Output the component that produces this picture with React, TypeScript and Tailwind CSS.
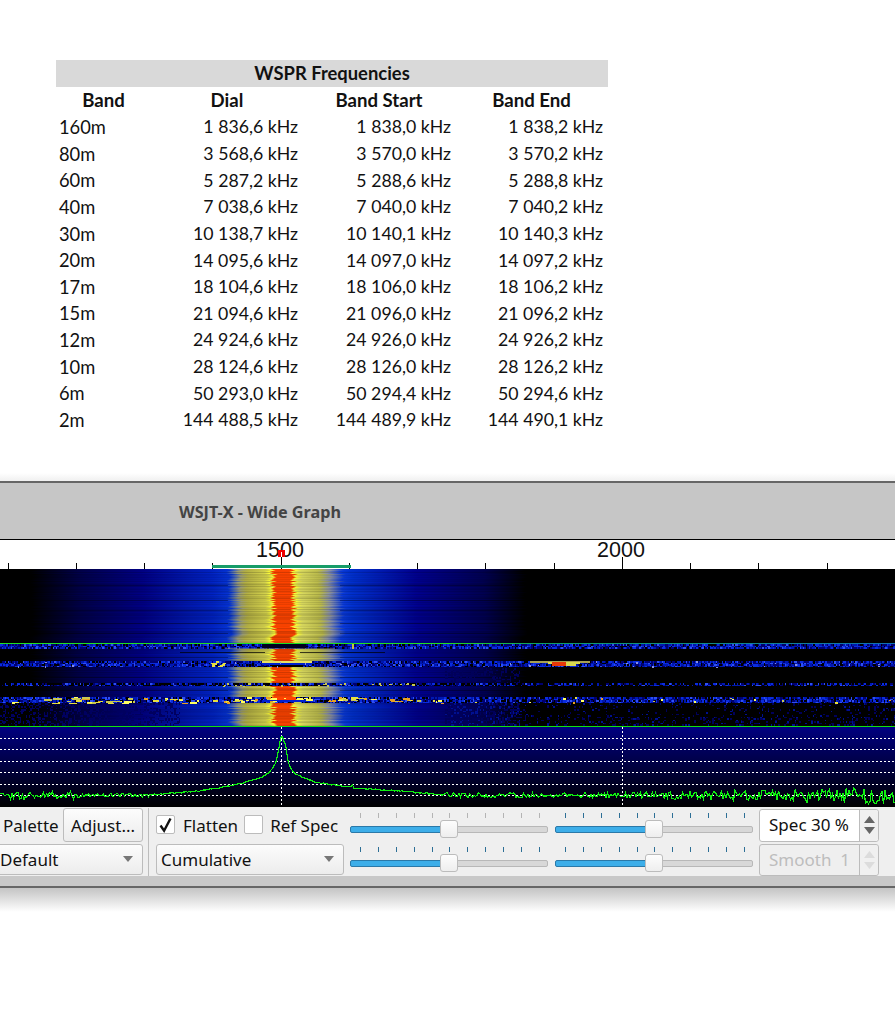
import { useMemo } from "react";

const rows = [
  ["160m", "1 836,6 kHz", "1 838,0 kHz", "1 838,2 kHz"],
  ["80m", "3 568,6 kHz", "3 570,0 kHz", "3 570,2 kHz"],
  ["60m", "5 287,2 kHz", "5 288,6 kHz", "5 288,8 kHz"],
  ["40m", "7 038,6 kHz", "7 040,0 kHz", "7 040,2 kHz"],
  ["30m", "10 138,7 kHz", "10 140,1 kHz", "10 140,3 kHz"],
  ["20m", "14 095,6 kHz", "14 097,0 kHz", "14 097,2 kHz"],
  ["17m", "18 104,6 kHz", "18 106,0 kHz", "18 106,2 kHz"],
  ["15m", "21 094,6 kHz", "21 096,0 kHz", "21 096,2 kHz"],
  ["12m", "24 924,6 kHz", "24 926,0 kHz", "24 926,2 kHz"],
  ["10m", "28 124,6 kHz", "28 126,0 kHz", "28 126,2 kHz"],
  ["6m", "50 293,0 kHz", "50 294,4 kHz", "50 294,6 kHz"],
  ["2m", "144 488,5 kHz", "144 489,9 kHz", "144 490,1 kHz"],
];

// seeded so the picture stays the same on every load
function makeRandom(seed: number) {
  let s = seed;
  return () => {
    s = (s * 1664525 + 1013904223) % 4294967296;
    return s / 4294967296;
  };
}

const stops: [number, string][] = [
  [0, "#000000"], [32, "#000000"], [80, "#000048"], [143, "#000085"], [190, "#0018b0"],
  [213, "#0022c4"], [229, "#0533d4"], [234, "#4464b8"], [240, "#9a9c78"], [247, "#b4b044"],
  [267, "#d4d24c"], [272, "#ffff38"], [275, "#ff4400"], [292, "#ff4400"], [295, "#ffff38"],
  [301, "#dcdc60"], [320, "#bcbc4c"], [330, "#8890a8"], [343, "#0a3adb"], [352, "#0030d0"],
  [417, "#000090"], [485, "#000050"], [525, "#000000"], [895, "#000000"],
];

function pickBlue(r: number, density: number) {
  if (r > density) return "#000000";
  const v = r / density;
  if (v < 0.35) return "#000070";
  if (v < 0.65) return "#0018b0";
  if (v < 0.9) return "#0a2ce0";
  return "#3050f0";
}

function Waterfall() {
  const { jitter, cells, specks } = useMemo(() => {
    const rnd = makeRandom(7);
    const jitter: { y: number; dx: number; o: number }[] = [];
    for (let y = 0; y < 157; y++) jitter.push({ y, dx: (rnd() - 0.5) * 6, o: 0.82 + rnd() * 0.18 });

    const cells: Record<string, string> = {};
    const put = (c: string, x: number, y: number, w = 1.5, h = 1.5) => {
      cells[c] = (cells[c] || "") + `M${x} ${y}h${w}v${h}h${-w}z`;
    };
    const bands: [number, number, number][] = [
      [75, 79, 0.85],
      [92, 98, 0.85],
      [114, 117, 0.55],
      [128, 134, 0.8],
    ];
    for (const [a, b, d] of bands) {
      for (let y = a; y < b; y += 1.5) {
        for (let x = 0; x < 895; x += 1.5) {
          put(pickBlue(rnd(), d), x, y);
        }
      }
    }
    // faint noise in the quiet rows on the right and left
    for (let y = 134; y < 157; y += 1.5) {
      for (let x = 445; x < 895; x += 1.5) {
        const d = x < 520 ? 0.5 : y > 146 ? 0.2 : 0.1;
        if (rnd() < d) put(rnd() < 0.75 ? "#00005a" : "#001090", x, y);
      }
      for (let x = 0; x < 180; x += 1.5) {
        if (rnd() < 0.35) put("#000060", x, y);
      }
    }
    for (let y = 99; y < 113; y += 1.5) {
      for (let x = 445; x < 520; x += 1.5) {
        if (rnd() < 0.3) put("#00005a", x, y);
      }
    }

    const specks: { x: number; y: number; w: number; c: string }[] = [];
    const colors = ["#e8e040", "#c8c850", "#ffff60", "#e8a020"];
    for (let i = 0; i < 120; i++) {
      const x = rnd() < 0.8 ? 5 + rnd() * 440 : 445 + rnd() * 445;
      specks.push({ x, y: 128 + rnd() * 6, w: 1.5 + rnd() * (x < 445 ? 7 : 1), c: colors[Math.floor(rnd() * 4)] });
    }
    for (let i = 0; i < 28; i++) {
      specks.push({ x: rnd() * 895, y: 92 + rnd() * 6, w: 1.5, c: "#8890e0" });
      specks.push({ x: 200 + rnd() * 220, y: 114 + rnd() * 3, w: 2, c: "#c8c850" });
    }
    for (let i = 0; i < 10; i++) specks.push({ x: 208 + rnd() * 18, y: 92 + rnd() * 5, w: 3, c: "#e8e040" });
    return { jitter, cells, specks };
  }, []);

  return (
    <svg width="895" height="157" viewBox="0 0 895 157" className="block" shapeRendering="crispEdges">
      <defs>
        <linearGradient id="wf" gradientUnits="userSpaceOnUse" x1="0" y1="0" x2="895" y2="0">
          {stops.map(([x, c]) => (
            <stop key={x} offset={x / 895} stopColor={c} />
          ))}
        </linearGradient>
        <linearGradient id="line" gradientUnits="userSpaceOnUse" x1="450" y1="0" x2="895" y2="0">
          <stop offset="0" stopColor="#20d820" />
          <stop offset="0.2" stopColor="#10a060" />
          <stop offset="1" stopColor="#1070b0" />
        </linearGradient>
      </defs>
      <rect width="895" height="157" fill="#000000" />
      {jitter.map((r) => (
        <g key={r.y} transform={`translate(${r.dx} 0)`}>
          <rect x="-6" y={r.y} width="907" height="1.2" fill="url(#wf)" opacity={r.o} />
        </g>
      ))}
      {/* dim rows across the tails of the signal */}
      {[16, 31, 41, 54, 64, 88, 108, 121].map((y) => (
        <g key={y} fill="#000000" opacity="0.3">
          <rect x="0" y={y} width="228" height="1" />
          <rect x="340" y={y} width="200" height="1" />
        </g>
      ))}
      {Object.entries(cells).map(([c, d]) => (
        <path key={c} d={d} fill={c} />
      ))}
      <rect x="262" y="75" width="44" height="4" fill="#000020" />
      <rect x="225" y="79" width="110" height="1" fill="#b0b050" opacity="0.4" />
      <rect x="180" y="83" width="85" height="1" fill="#000000" opacity="0.7" />
      <rect x="300" y="83" width="85" height="1" fill="#000000" opacity="0.7" />
      <rect x="262" y="92" width="50" height="1.5" fill="#e8e060" />
      <rect x="262" y="93.5" width="50" height="2" fill="#0020d0" />
      <rect x="272" y="95.5" width="30" height="2.5" fill="#000000" />
      <rect x="272" y="128" width="24" height="3" fill="#ff4400" />
      <rect x="262" y="130.5" width="50" height="2" fill="#0020d0" />
      {specks.map((s, i) => (
        <rect key={i} x={s.x} y={s.y} width={s.w} height="1.5" fill={s.c} />
      ))}
      {/* short burst near 1900 */}
      <rect x="530" y="92" width="60" height="1.5" fill="#a8a050" />
      <rect x="548" y="93" width="32" height="2" fill="#d8d850" />
      <rect x="552" y="93" width="14" height="4" fill="#e83808" />
      <rect x="566" y="94" width="10" height="3" fill="#d8d850" />
      <rect x="352" y="75" width="2" height="5" fill="#c8c040" />
      <rect x="0" y="74" width="450" height="1" fill="#20e020" />
      <rect x="450" y="74" width="445" height="1" fill="url(#line)" />
    </svg>
  );
}

function Spectrum() {
  const points = useMemo(() => {
    const rnd = makeRandom(21);
    const shape: [number, number][] = [
      [0, 69], [150, 68], [200, 64], [240, 57], [262, 50], [270, 45], [276, 36], [279, 20],
      [281, 9], [283, 9], [284, 16], [286, 17], [287, 30], [289, 38], [293, 45], [303, 51],
      [320, 56], [350, 60], [351, 60], [352, 56], [354, 61], [400, 64], [445, 68], [895, 69],
    ];
    const base = (x: number) => {
      for (let i = 1; i < shape.length; i++) {
        if (x <= shape[i][0]) {
          const [x0, y0] = shape[i - 1];
          const [x1, y1] = shape[i];
          return y0 + ((x - x0) / (x1 - x0 || 1)) * (y1 - y0);
        }
      }
      return 69;
    };
    const out: string[] = [];
    for (let x = 0; x <= 895; x += x > 270 && x < 295 ? 1 : 1.5) {
      let amp = 0.6;
      if (x < 75) amp = 4;
      else if (x < 150) amp = 2;
      else if (x > 620) amp = 3 + ((x - 620) / 275) * 6;
      else if (x > 445) amp = 2.5;
      out.push(`${x},${(base(x) + (rnd() - 0.5) * 2 * amp).toFixed(1)}`);
    }
    return out.join(" ");
  }, []);

  return (
    <svg width="895" height="80" viewBox="0 0 895 80" className="block" shapeRendering="crispEdges">
      <defs>
        <linearGradient id="specbg" x1="0" y1="0" x2="0" y2="1">
          <stop offset="0" stopColor="#000080" />
          <stop offset="1" stopColor="#000000" />
        </linearGradient>
      </defs>
      <rect width="895" height="80" fill="url(#specbg)" />
      {[11.5, 22.5, 34.5, 45.5, 57.5, 68.5].map((y) => (
        <line key={y} x1="0" x2="895" y1={y} y2={y} stroke="#ffffff" strokeDasharray="2 2" />
      ))}
      {[281.5, 622.5].map((x) => (
        <line key={x} x1={x} x2={x} y1="0" y2="80" stroke="#ffffff" strokeDasharray="2 2" />
      ))}
      <polyline points={points} fill="none" stroke="#10f010" strokeWidth="1.2" />
    </svg>
  );
}

function Scale() {
  const ticks = [7.5, 76, 144, 212, 281, 349, 417, 485, 554, 622, 690, 758, 827];
  return (
    <div className="relative h-[29px] bg-white font-['Liberation_Sans',sans-serif]">
      {ticks.map((x) => (
        <div
          key={x}
          className={`absolute bottom-0 w-px bg-black ${x === 281 || x === 622 ? "h-[12px]" : "h-[6px]"}`}
          style={{ left: x }}
        />
      ))}
      <span className="absolute left-[231px] top-[-2px] w-[98px] text-center text-[21.5px] leading-[25px] text-[#111]">1500</span>
      <span className="absolute left-[572px] top-[-2px] w-[98px] text-center text-[21.5px] leading-[25px] text-[#111]">2000</span>
      <div className="absolute left-[212px] top-[25px] h-[3px] w-[139px] bg-[#179c68]" />
      <div className="absolute left-[278px] top-[10px] flex h-[7px] w-[7px] justify-center bg-[#f00000] pt-[2px]">
        <div className="h-[5px] w-px bg-white" />
      </div>
    </div>
  );
}

function Arrow({ color = "#777777" }: { color?: string }) {
  return (
    <svg width="10" height="6" viewBox="0 0 10 6">
      <path d="M0 0h10L5 6z" fill={color} />
    </svg>
  );
}

function Combo({ label, className }: { label: string; className: string }) {
  return (
    <div className={`flex h-[31px] items-center justify-between rounded-[3px] border border-[#bcbcbc] bg-linear-to-b from-[#fcfcfc] to-[#ececec] pr-[9px] ${className}`}>
      <span className="pt-[2px]">{label}</span>
      <Arrow />
    </div>
  );
}

function Checkbox({ checked }: { checked?: boolean }) {
  return (
    <div className="flex h-[19px] w-[19px] items-center justify-center rounded-[2px] border border-[#bcbcbc] bg-white">
      {checked && (
        <svg width="15" height="16" viewBox="0 0 15 16">
          <path d="M2.5 8.5l3.6 5.2L12.5 1.5" fill="none" stroke="#111" strokeWidth="2.4" />
        </svg>
      )}
    </div>
  );
}

function Slider({ top, faded }: { top?: boolean; faded?: boolean }) {
  return (
    <div className={`w-[198px] ${top ? "h-[34px] pt-[5px]" : "h-[31px] pt-[3px]"}`}>
      <div className="flex h-[5px] justify-between pl-[10px] pr-[8px]">
        {Array.from({ length: 11 }).map((_, i) => (
          <div key={i} className={`h-[5px] w-px ${faded ? "bg-[#b4b4b4]" : "bg-[#2d6f96]"}`} />
        ))}
      </div>
      <div className="relative mt-[8px] flex h-[7px]">
        <div className="h-[7px] w-[92px] rounded-l-[2px] border border-[#2b79a8] bg-[#3daee9]" />
        <div className="h-[7px] flex-1 rounded-r-[2px] border border-[#b8b8b8] bg-[#d8d8d8]" />
        <div className="absolute left-[90px] top-[-6px] h-[18px] w-[18px] rounded-[3px] border border-[#bcbcbc] bg-linear-to-b from-[#fdfdfd] to-[#eeeeee]" />
      </div>
    </div>
  );
}

function Spin({ label, disabled }: { label: string; disabled?: boolean }) {
  const arrow = disabled ? "#dcdcdc" : "#666666";
  return (
    <div className={`flex w-[120px] rounded-[3px] border border-[#bcbcbc] ${disabled ? "h-[32px] bg-[#efefef] text-[#bdbdbd]" : "h-[33px] bg-white text-[#111]"}`}>
      <div className="flex flex-1 items-center whitespace-pre pl-[9px]">{label}</div>
      <div className="flex w-[19px] flex-col items-center justify-center gap-[4px] rounded-r-[3px] border-l border-[#bcbcbc] bg-[#f0f0f0]">
        <svg width="11" height="7" viewBox="0 0 11 7"><path d="M0 7h11L5.5 0z" fill={arrow} /></svg>
        <svg width="11" height="7" viewBox="0 0 11 7"><path d="M0 0h11L5.5 7z" fill={arrow} /></svg>
      </div>
    </div>
  );
}

function Controls() {
  return (
    <div className="flex h-[69px] bg-[#efefef] pt-px text-[17px] text-[#111]">
      {/* palette column */}
      <div className="flex w-[143px] flex-col">
        <div className="flex h-[34px] items-center justify-between">
          <span className="pl-[3px] pt-[2px]">Palette</span>
          <div className="flex h-[34px] w-[80px] items-center justify-center rounded-[3px] border border-[#bcbcbc] bg-linear-to-b from-[#fcfcfc] to-[#ececec] pt-[2px]">
            Adjust...
          </div>
        </div>
        <Combo label="Default" className="ml-[-10px] mt-[2px] w-[153px] pl-[9px]" />
      </div>
      <div className="ml-[5px] h-[68px] w-px bg-[#bdbdbd]" />

      {/* flatten column */}
      <div className="ml-[7px] flex w-[188px] flex-col">
        <div className="flex h-[34px] items-center">
          <Checkbox checked />
          <span className="ml-[8px] pt-[2px]">Flatten</span>
          <div className="ml-[6px]"><Checkbox /></div>
          <span className="ml-[7px] pt-[2px]">Ref Spec</span>
        </div>
        <Combo label="Cumulative" className="mt-[2px] w-[188px] pl-[4px]" />
      </div>

      {/* sliders */}
      <div className="ml-[6px] grid w-[403px] grid-cols-[198px_198px] gap-x-[7px] gap-y-[2px]">
        <Slider top faded />
        <Slider top />
        <Slider />
        <Slider />
      </div>

      {/* spin boxes */}
      <div className="ml-[6px] flex flex-col gap-[2px] pt-px">
        <Spin label="Spec 30 %" />
        <Spin label="Smooth  1" disabled />
      </div>
    </div>
  );
}

export default function App() {
  return (
    <div className="h-[1015px] w-[895px] overflow-hidden bg-white font-['Noto_Sans',sans-serif]">
      {/* table */}
      <div className="ml-[56px] w-[552px] pt-[60px] font-['Lato',sans-serif] text-[17.7px] text-[#111]">
        <div className="flex h-[27px] items-center justify-center bg-[#d9d9d9] text-[18.4px] font-bold">WSPR Frequencies</div>
        <div className="grid h-[27px] grid-cols-[95px_152px_152px_153px] items-center text-center text-[18.6px] font-bold">
          <div>Band</div>
          <div>Dial</div>
          <div>Band Start</div>
          <div>Band End</div>
        </div>
        {rows.map((r) => (
          <div key={r[0]} className="grid h-[26.64px] grid-cols-[95px_152px_152px_153px] items-center text-right">
            <div className="pl-[3px] text-left text-[18.3px]">{r[0]}</div>
            <div className="pr-[5px]">{r[1]}</div>
            <div className="pr-[4px]">{r[2]}</div>
            <div className="pr-[5px]">{r[3]}</div>
          </div>
        ))}
      </div>

      {/* shadow above the window */}
      <div className="mt-[39px] h-[8px] bg-linear-to-b from-white to-[#f0f0f0]" />

      {/* wide graph window */}
      <div className="border-y-2 border-[#666666]">
        <div className="flex h-[57px] items-center border-b border-black bg-[#c6c6c6] pl-[179px] pt-[3px] text-[16.2px] font-bold text-[#444444]">
          WSJT-X - Wide Graph
        </div>
        <Scale />
        <Waterfall />
        <div className="h-px bg-[#10e010]" />
        <Spectrum />
        <Controls />
        <div className="h-[10px] bg-[#c8c8c8]" />
      </div>
      <div className="h-[24px] bg-linear-to-b from-[#c4c4c4] to-white" />
    </div>
  );
}
